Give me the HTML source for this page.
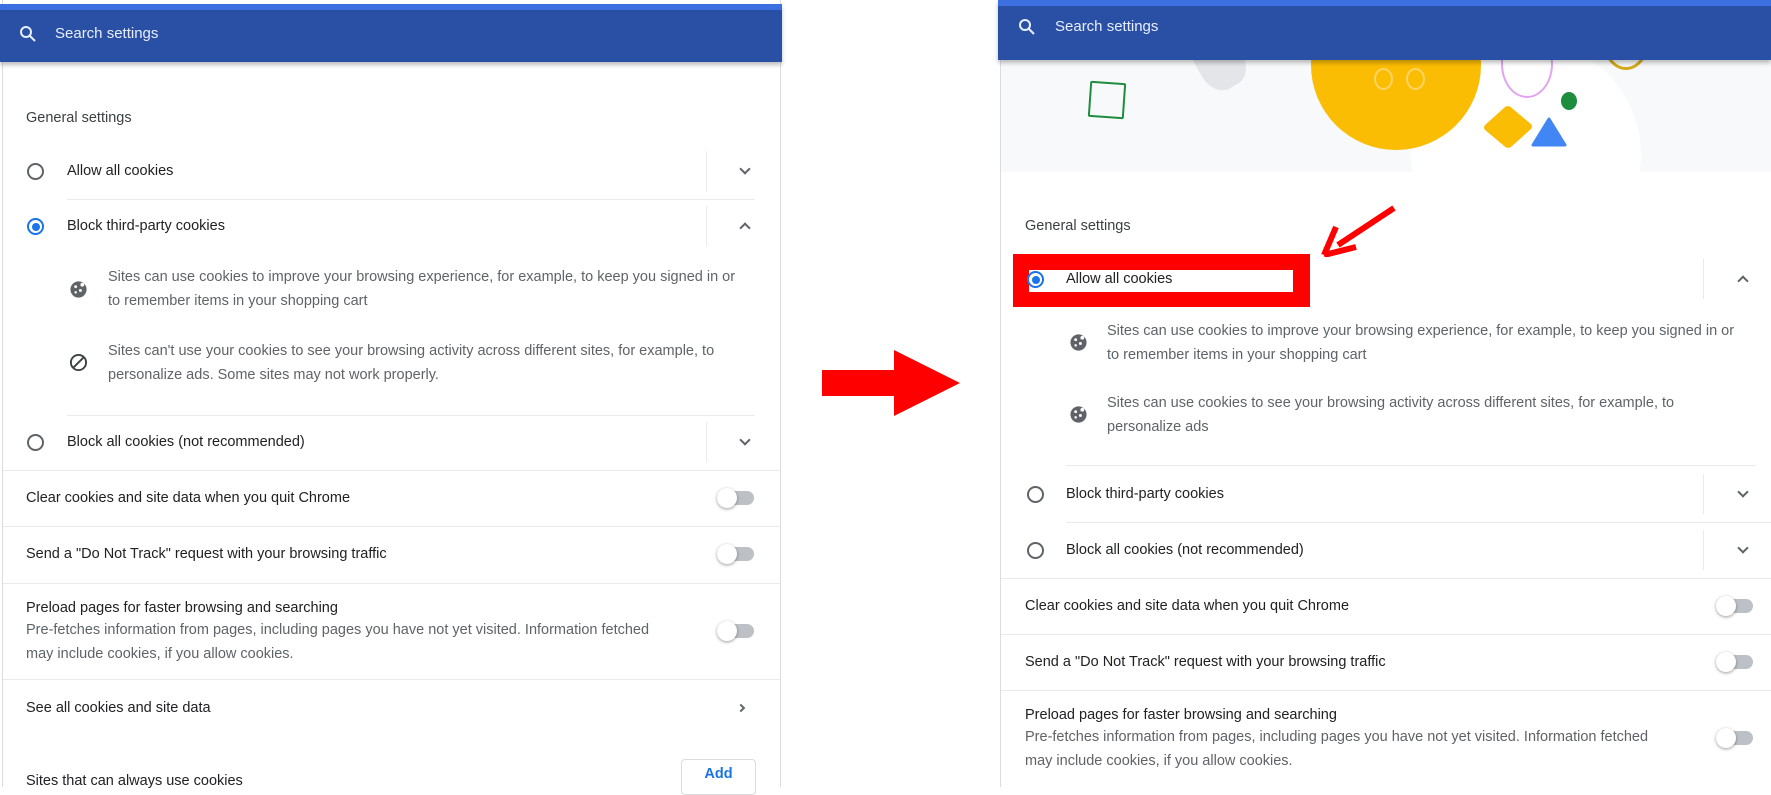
<!DOCTYPE html>
<html><head><meta charset="utf-8"><style>
*{margin:0;padding:0;box-sizing:border-box}
body{width:1771px;height:787px;background:#fff;position:relative;overflow:hidden;font-family:"Liberation Sans",Arial,sans-serif;color:#202124}
.a{position:absolute;white-space:nowrap}
.t{font-size:14.5px;line-height:18px;transform:translateY(-9px)}
.d{font-size:14.5px;color:#5f6368;line-height:24px}
.hr{position:absolute;height:1px;background:#e8eaed}
.vs{position:absolute;width:1px;height:40px;background:#e8eaed}
.rad{position:absolute;width:17px;height:17px;border:2px solid #5f6368;border-radius:50%;transform:translate(-8px,-8px)}
.rad.on{border-color:#1a73e8}
.rad.on:after{content:"";position:absolute;left:2.5px;top:2.5px;width:8px;height:8px;border-radius:50%;background:#1a73e8}
.chev{position:absolute;width:8px;height:8px;border-right:2px solid #5f6368;border-bottom:2px solid #5f6368}
.dn{transform:translate(-4px,-6px) rotate(45deg)}
.up{transform:translate(-4px,-2px) rotate(-135deg)}
.tg{position:absolute;width:34px;height:14px;border-radius:7px;background:#bdc1c6;transform:translate(-17px,-7px)}
.tg:after{content:"";position:absolute;left:-3px;top:-3px;width:20px;height:20px;border-radius:50%;background:#fff;box-shadow:0 1px 3px rgba(0,0,0,.4)}
.bar{position:absolute;background:#2a50a6;border-top:6px solid #3c6fe0;box-shadow:0 3px 4px rgba(0,0,0,.25)}
.st{color:#e8eefc;font-size:15px}
</style></head><body>
<!-- left panel -->
<div style="position:absolute;left:2px;top:0;width:779px;height:787px;border-left:1px solid #dadce0;border-right:1px solid #dadce0"></div>
<div class="bar" style="left:0;top:4px;width:782px;height:58px"></div>
<svg class="a" style="left:19px;top:25px" width="18" height="18" viewBox="0 0 18 18"><circle cx="7" cy="7" r="5" fill="none" stroke="#e8eefc" stroke-width="2"/><path d="M11 11l5 5" stroke="#e8eefc" stroke-width="2"/></svg>
<div class="a st" style="left:55px;top:25px">Search settings</div>
<div class="a t" style="left:26px;top:118px;color:#3c4043">General settings</div>
<div class="rad" style="left:35px;top:171px"></div><div class="a t" style="left:67px;top:171px">Allow all cookies</div>
<div class="vs" style="left:706px;top:151px"></div><div class="chev dn" style="left:745px;top:171px"></div>
<div class="hr" style="left:67px;top:199px;width:688px"></div>
<div class="rad on" style="left:35px;top:226px"></div><div class="a t" style="left:67px;top:226px">Block third-party cookies</div>
<div class="vs" style="left:706px;top:206px"></div><div class="chev up" style="left:745px;top:226px"></div>
<svg class="a" style="left:69px;top:280px" width="19" height="19" viewBox="0 0 20 20"><circle cx="10" cy="10" r="8.5" fill="#5f6368"/><circle cx="7" cy="7" r="1.5" fill="#fff"/><circle cx="12" cy="11" r="1.5" fill="#fff"/><circle cx="7" cy="13" r="1.3" fill="#fff"/><circle cx="14" cy="5" r="2" fill="#fff"/></svg>
<div class="a d" style="left:108px;top:265px">Sites can use cookies to improve your browsing experience, for example, to keep you signed in or<br>to remember items in your shopping cart</div>
<svg class="a" style="left:69px;top:353px" width="19" height="19" viewBox="0 0 20 20"><circle cx="10" cy="10" r="8" fill="none" stroke="#3c4043" stroke-width="2"/><path d="M4.5 15.5L15.5 4.5" stroke="#3c4043" stroke-width="2"/></svg>
<div class="a d" style="left:108px;top:339px">Sites can't use your cookies to see your browsing activity across different sites, for example, to<br>personalize ads. Some sites may not work properly.</div>
<div class="hr" style="left:67px;top:415px;width:688px"></div>
<div class="rad" style="left:35px;top:442px"></div><div class="a t" style="left:67px;top:442px">Block all cookies (not recommended)</div>
<div class="vs" style="left:706px;top:422px"></div><div class="chev dn" style="left:745px;top:442px"></div>
<div class="hr" style="left:3px;top:470px;width:777px"></div>
<div class="a t" style="left:26px;top:498px">Clear cookies and site data when you quit Chrome</div><div class="tg" style="left:737px;top:498px"></div>
<div class="hr" style="left:3px;top:526px;width:777px"></div>
<div class="a t" style="left:26px;top:554px">Send a "Do Not Track" request with your browsing traffic</div><div class="tg" style="left:737px;top:554px"></div>
<div class="hr" style="left:3px;top:583px;width:777px"></div>
<div class="a t" style="left:26px;top:608px">Preload pages for faster browsing and searching</div>
<div class="a d" style="left:26px;top:618px">Pre-fetches information from pages, including pages you have not yet visited. Information fetched<br>may include cookies, if you allow cookies.</div>
<div class="tg" style="left:737px;top:631px"></div>
<div class="hr" style="left:3px;top:679px;width:777px"></div>
<div class="a t" style="left:26px;top:708px">See all cookies and site data</div>
<div class="chev" style="left:742px;top:708px;width:6px;height:6px;transform:translate(-4px,-3px) rotate(-45deg)"></div>
<div class="a t" style="left:26px;top:781px">Sites that can always use cookies</div>
<div class="a" style="left:681px;top:759px;width:75px;height:36px;border:1px solid #dadce0;border-radius:4px;color:#1a73e8;font-size:14.5px;font-weight:bold;text-align:center;line-height:28px">Add</div>

<!-- arrow -->
<svg class="a" style="left:820px;top:348px" width="142" height="70" viewBox="0 0 142 70"><path d="M2 22H74V2L140 35L74 68V48H2Z" fill="#f00"/></svg>

<!-- right panel -->
<div style="position:absolute;left:1000px;top:0;width:771px;height:787px;border-left:1px solid #dadce0"></div>
<div style="position:absolute;left:1001px;top:60px;width:770px;height:112px;background:#f8f9fa;overflow:hidden">
<div style="position:absolute;left:410px;top:-20px;width:230px;height:230px;border-radius:50%;background:#fff"></div>
<div style="position:absolute;left:195px;top:-30px;width:46px;height:60px;border-radius:40%;background:#e3e5e8;transform:rotate(-30deg)"></div>
<div style="position:absolute;left:88px;top:22px;width:36px;height:36px;border:2px solid #1e8e3e;border-radius:2px;transform:rotate(4deg)"></div>
<div style="position:absolute;left:310px;top:-80px;width:170px;height:170px;border-radius:50%;background:#fbbc04"></div>
<div style="position:absolute;left:373px;top:8px;width:19px;height:22px;border:2px solid #fdd663;border-radius:50%"></div>
<div style="position:absolute;left:405px;top:8px;width:19px;height:22px;border:2px solid #fdd663;border-radius:50%"></div>
<div style="position:absolute;left:500px;top:-30px;width:52px;height:68px;border:2px solid #e1a4f0;border-radius:50%"></div>
<div style="position:absolute;left:560px;top:32px;width:16px;height:18px;border-radius:50%;background:#1e8e3e"></div>
<div style="position:absolute;left:600px;top:-60px;width:50px;height:70px;border:3px solid #d4a91a;border-radius:50%"></div>
<div style="position:absolute;left:490px;top:50px;width:34px;height:34px;background:#fbbc04;border-radius:4px;transform:rotate(40deg) skewX(-8deg)"></div>
<svg style="position:absolute;left:530px;top:57px" width="36" height="30"><path d="M18 2L34 28H2Z" fill="#4285f4" stroke="#4285f4" stroke-linejoin="round" stroke-width="3"/></svg>
</div>
<div class="bar" style="left:998px;top:0;width:773px;height:60px;border-top-width:6px"></div>
<svg class="a" style="left:1018px;top:18px" width="18" height="18" viewBox="0 0 18 18"><circle cx="7" cy="7" r="5" fill="none" stroke="#e8eefc" stroke-width="2"/><path d="M11 11l5 5" stroke="#e8eefc" stroke-width="2"/></svg>
<div class="a st" style="left:1055px;top:18px">Search settings</div>
<div class="a t" style="left:1025px;top:226px;color:#3c4043">General settings</div>
<svg class="a" style="left:1320px;top:205px" width="80" height="52" viewBox="0 0 80 52"><path d="M74 3L18 40" stroke="#f00" stroke-width="6"/><path d="M4 50L16 22M4 50L36 42" stroke="#f00" stroke-width="6"/></svg>
<div class="a" style="left:1013px;top:254px;width:297px;height:53px;background:#f00"></div>
<div class="a" style="left:1029px;top:270px;width:264px;height:22px;background:#fff"></div>
<div class="rad on" style="left:1035px;top:279px"></div><div class="a t" style="left:1066px;top:279px">Allow all cookies</div>
<div class="vs" style="left:1703px;top:259px"></div><div class="chev up" style="left:1743px;top:279px"></div>
<svg class="a" style="left:1069px;top:333px" width="19" height="19" viewBox="0 0 20 20"><circle cx="10" cy="10" r="8.5" fill="#5f6368"/><circle cx="7" cy="7" r="1.5" fill="#fff"/><circle cx="12" cy="11" r="1.5" fill="#fff"/><circle cx="7" cy="13" r="1.3" fill="#fff"/><circle cx="14" cy="5" r="2" fill="#fff"/></svg>
<div class="a d" style="left:1107px;top:319px">Sites can use cookies to improve your browsing experience, for example, to keep you signed in or<br>to remember items in your shopping cart</div>
<svg class="a" style="left:1069px;top:405px" width="19" height="19" viewBox="0 0 20 20"><circle cx="10" cy="10" r="8.5" fill="#5f6368"/><circle cx="7" cy="7" r="1.5" fill="#fff"/><circle cx="12" cy="11" r="1.5" fill="#fff"/><circle cx="7" cy="13" r="1.3" fill="#fff"/><circle cx="14" cy="5" r="2" fill="#fff"/></svg>
<div class="a d" style="left:1107px;top:391px">Sites can use cookies to see your browsing activity across different sites, for example, to<br>personalize ads</div>
<div class="hr" style="left:1066px;top:465px;width:690px"></div>
<div class="rad" style="left:1035px;top:494px"></div><div class="a t" style="left:1066px;top:494px">Block third-party cookies</div>
<div class="vs" style="left:1703px;top:474px"></div><div class="chev dn" style="left:1743px;top:494px"></div>
<div class="hr" style="left:1066px;top:522px;width:705px"></div>
<div class="rad" style="left:1035px;top:550px"></div><div class="a t" style="left:1066px;top:550px">Block all cookies (not recommended)</div>
<div class="vs" style="left:1703px;top:530px"></div><div class="chev dn" style="left:1743px;top:550px"></div>
<div class="hr" style="left:1001px;top:578px;width:770px"></div>
<div class="a t" style="left:1025px;top:606px">Clear cookies and site data when you quit Chrome</div><div class="tg" style="left:1736px;top:606px"></div>
<div class="hr" style="left:1001px;top:634px;width:770px"></div>
<div class="a t" style="left:1025px;top:662px">Send a "Do Not Track" request with your browsing traffic</div><div class="tg" style="left:1736px;top:662px"></div>
<div class="hr" style="left:1001px;top:690px;width:770px"></div>
<div class="a t" style="left:1025px;top:715px">Preload pages for faster browsing and searching</div>
<div class="a d" style="left:1025px;top:725px">Pre-fetches information from pages, including pages you have not yet visited. Information fetched<br>may include cookies, if you allow cookies.</div>
<div class="tg" style="left:1736px;top:738px"></div>
</body></html>
